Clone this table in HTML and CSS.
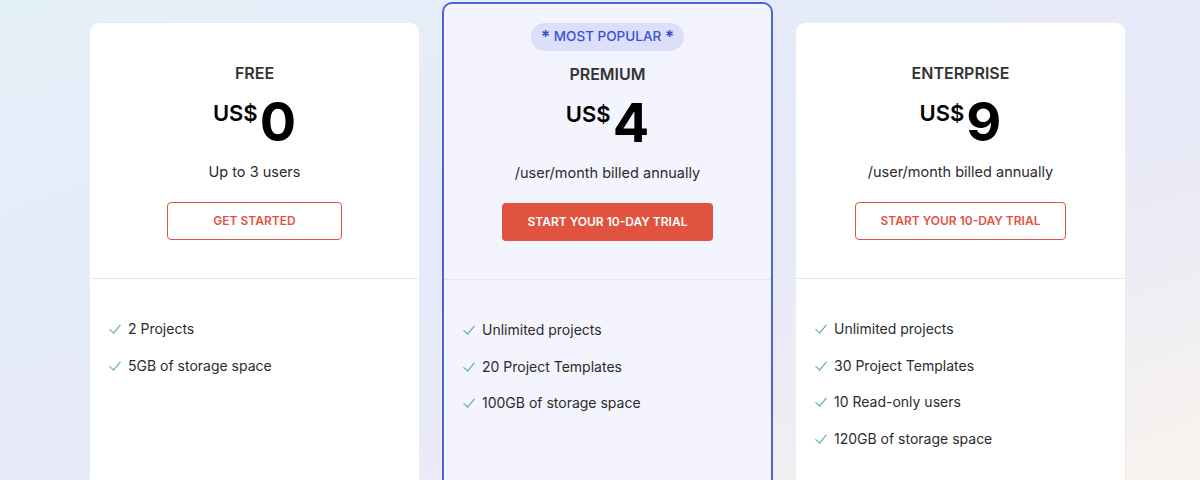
FILE: index.html
```html
<html>
    <head>
        <link rel="stylesheet" href="styles.css">
    </head>
    <body>
        <div class="plans">
            <div class="plan">
                <div class="plan_head">
                    <div class="plan_name">FREE</div>
                    <div class="price"><span class="cur">US$</span><span class="amount">0</span></div>
                    <div class="note">Up to 3 users</div>
                    <a class="btn btn_line btn_small">GET STARTED</a>
                </div>
                <ul class="features">
                    <li>2 Projects</li>
                    <li>5GB of storage space</li>
                </ul>
            </div>

            <div class="plan plan_popular">
                <div class="plan_head">
                    <div class="badge"><span class="star">*</span> MOST POPULAR <span class="star">*</span></div>
                    <div class="plan_name">PREMIUM</div>
                    <div class="price"><span class="cur">US$</span><span class="amount">4</span></div>
                    <div class="note">/user/month billed annually</div>
                    <a class="btn btn_fill">START YOUR 10-DAY TRIAL</a>
                </div>
                <ul class="features">
                    <li>Unlimited projects</li>
                    <li>20 Project Templates</li>
                    <li>100GB of storage space</li>
                </ul>
            </div>

            <div class="plan">
                <div class="plan_head">
                    <div class="plan_name">ENTERPRISE</div>
                    <div class="price"><span class="cur">US$</span><span class="amount">9</span></div>
                    <div class="note">/user/month billed annually</div>
                    <a class="btn btn_line">START YOUR 10-DAY TRIAL</a>
                </div>
                <ul class="features">
                    <li>Unlimited projects</li>
                    <li>30 Project Templates</li>
                    <li>10 Read-only users</li>
                    <li>120GB of storage space</li>
                </ul>
            </div>
        </div>
    </body>
</html>
```

FILE: styles.css
```css
html, body {
    margin: 0;
    height: 100%;
    overflow: hidden;
}

body {
    font-family: Inter, "Noto Sans", sans-serif;
    color: #2b2b2b;
    background: linear-gradient(160deg, #e5f1f8 0%, #e5e9fa 45%, #ebebf6 70%, #faf4ee 100%);
}

.plans {
    display: flex;
    gap: 22px;
    padding-left: 89px;
    padding-top: 2px;
    height: 100%;
    box-sizing: border-box;
}

.plan {
    width: 331px;
    margin-top: 20px;
    background-color: #ffffff;
    border: 1px solid #ececf0;
    border-bottom: none;
    border-radius: 10px 10px 0 0;
    box-sizing: border-box;
}

.plan_popular {
    margin-top: 0;
    background-color: #f3f4fd;
    border: 2px solid #4c63d6;
    border-bottom: none;
}

.plan_head {
    display: flex;
    flex-direction: column;
    align-items: center;
    padding-top: 40px;
    height: 256px;
    box-sizing: border-box;
    border-bottom: 1px solid #e6e6e6;
}

.plan_popular .plan_head {
    padding-top: 19px;
    height: 276px;
    border-bottom-color: #e9e6dc;
}

.badge {
    background-color: #dcdffa;
    color: #3a50d4;
    font-size: 13.5px;
    font-weight: 500;
    line-height: 27px;
    padding: 0 10px;
    border-radius: 14px;
    margin-bottom: 13px;
}

.star {
    font-size: 17px;
    font-weight: 700;
    vertical-align: -2px;
}

.plan_name {
    font-size: 16px;
    font-weight: 600;
    color: #333333;
    line-height: 20px;
}

.price {
    display: flex;
    align-items: flex-start;
    margin-top: 12px;
    color: #000000;
}

.cur {
    font-size: 22px;
    font-weight: 600;
    line-height: 22px;
    margin-top: 7px;
    margin-right: 2px;
}

.amount {
    font-size: 54px;
    font-weight: 700;
    line-height: 54px;
}

.note {
    font-size: 14.5px;
    margin-top: 13px;
    line-height: 20px;
}

.btn {
    display: block;
    margin-top: 20px;
    width: 211px;
    height: 38px;
    line-height: 38px;
    text-align: center;
    font-size: 12px;
    font-weight: 600;
    border-radius: 4px;
    box-sizing: border-box;
}

.btn_small {
    width: 175px;
}

.btn_line {
    color: #e0533f;
    border: 1.5px solid #e0533f;
    line-height: 35px;
}

.btn_fill {
    color: #ffffff;
    background-color: #e0533f;
}

.features {
    list-style: none;
    margin: 0;
    padding: 40px 0 0 38px;
}

.features li {
    position: relative;
    font-size: 14px;
    line-height: 20px;
    margin-bottom: 16.5px;
    color: #2b2b2b;
}

.features li::before {
    content: "";
    position: absolute;
    left: -16px;
    top: 3px;
    width: 5px;
    height: 10px;
    border-right: 1.5px solid #4fae7f;
    border-bottom: 1.5px solid #4fae7f;
    transform: rotate(40deg);
}
```
